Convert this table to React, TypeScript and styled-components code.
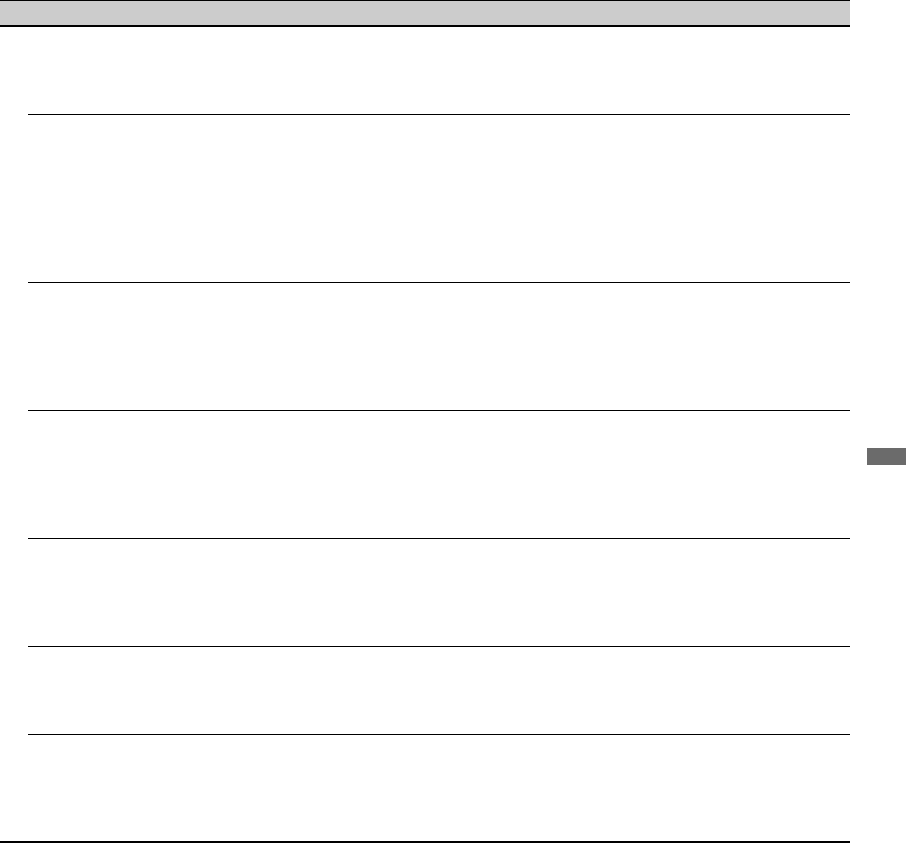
import styled, { createGlobalStyle } from "styled-components";

const GlobalStyle = createGlobalStyle`
  html, body {
    margin: 0;
    padding: 0;
    background: #ffffff;
    font-family: "Liberation Serif", serif;
  }
`;

interface RowProps {
  h: number;
  last?: boolean;
}

const rows = [88, 168, 128, 128, 108, 88];

const App = () => {
  return (
    <Page>
      <GlobalStyle />
      <Table>
        <Header />
        {rows.map((h, i) => (
          <Row key={i} h={h} />
        ))}
        <Row h={108} last />
      </Table>
      <Margin>
        <ThumbTab />
      </Margin>
    </Page>
  );
};

export default App;

const Page = styled.div`
  display: flex;
  width: 906px;
  height: 843px;
  overflow: hidden;
`;

const Table = styled.div`
  display: flex;
  flex-direction: column;
  width: 850px;
  flex-shrink: 0;
`;

const Header = styled.div`
  box-sizing: border-box;
  height: 27px;
  background-color: #cccccc;
  border-top: 1px solid #000000;
  border-bottom: 2px solid #000000;
`;

const Row = styled.div<RowProps>`
  box-sizing: border-box;
  height: ${(props) => props.h}px;
  margin-left: ${(props) => (props.last ? 0 : 28)}px;
  border-bottom: ${(props) => (props.last ? 2 : 1)}px solid #000000;
`;

const Margin = styled.div`
  display: flex;
  flex-direction: column;
  padding-left: 17px;
  flex: 1;
`;

const ThumbTab = styled.div`
  margin-top: 448px;
  height: 17px;
  width: 39px;
  background-color: #6b6b6b;
`;
